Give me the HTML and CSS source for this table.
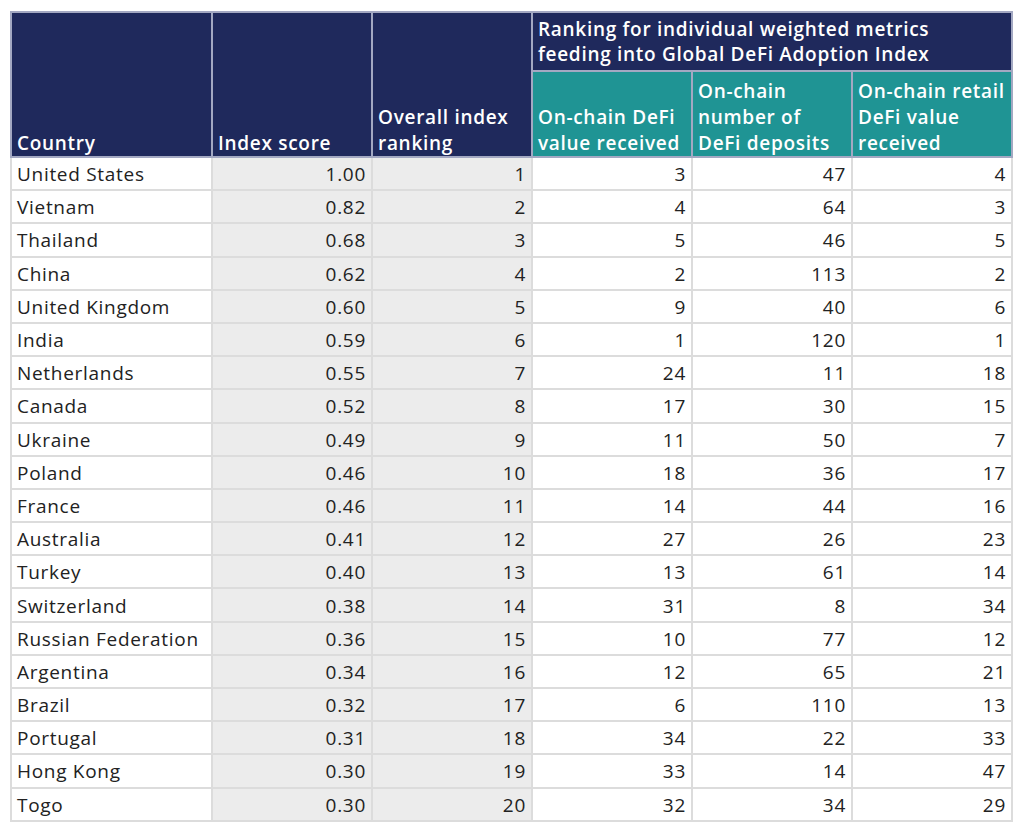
FILE: index.html
```html
<!DOCTYPE html>
<html>
<head>
<meta charset="utf-8">
<link rel="stylesheet" href="styles.css">
</head>
<body>
<div class="page">
<table class="rank">
  <colgroup>
    <col class="c-country"><col class="c-mid"><col class="c-mid"><col class="c-mid"><col class="c-mid4"><col class="c-mid">
  </colgroup>
  <thead>
    <tr class="group-row">
      <th rowspan="2" class="navy">Country</th>
      <th rowspan="2" class="navy">Index score</th>
      <th rowspan="2" class="navy">Overall index ranking</th>
      <th colspan="3" class="navy group">Ranking for individual weighted metrics feeding into Global DeFi Adoption Index</th>
    </tr>
    <tr class="sub-row">
      <th class="teal">On-chain DeFi value received</th>
      <th class="teal">On-chain number of DeFi deposits</th>
      <th class="teal">On-chain retail DeFi value received</th>
    </tr>
  </thead>
  <tbody>
    <tr><td>United States</td><td class="num grey">1.00</td><td class="num grey">1</td><td class="num">3</td><td class="num">47</td><td class="num">4</td></tr>
    <tr><td>Vietnam</td><td class="num grey">0.82</td><td class="num grey">2</td><td class="num">4</td><td class="num">64</td><td class="num">3</td></tr>
    <tr><td>Thailand</td><td class="num grey">0.68</td><td class="num grey">3</td><td class="num">5</td><td class="num">46</td><td class="num">5</td></tr>
    <tr><td>China</td><td class="num grey">0.62</td><td class="num grey">4</td><td class="num">2</td><td class="num">113</td><td class="num">2</td></tr>
    <tr><td>United Kingdom</td><td class="num grey">0.60</td><td class="num grey">5</td><td class="num">9</td><td class="num">40</td><td class="num">6</td></tr>
    <tr><td>India</td><td class="num grey">0.59</td><td class="num grey">6</td><td class="num">1</td><td class="num">120</td><td class="num">1</td></tr>
    <tr><td>Netherlands</td><td class="num grey">0.55</td><td class="num grey">7</td><td class="num">24</td><td class="num">11</td><td class="num">18</td></tr>
    <tr><td>Canada</td><td class="num grey">0.52</td><td class="num grey">8</td><td class="num">17</td><td class="num">30</td><td class="num">15</td></tr>
    <tr><td>Ukraine</td><td class="num grey">0.49</td><td class="num grey">9</td><td class="num">11</td><td class="num">50</td><td class="num">7</td></tr>
    <tr><td>Poland</td><td class="num grey">0.46</td><td class="num grey">10</td><td class="num">18</td><td class="num">36</td><td class="num">17</td></tr>
    <tr><td>France</td><td class="num grey">0.46</td><td class="num grey">11</td><td class="num">14</td><td class="num">44</td><td class="num">16</td></tr>
    <tr><td>Australia</td><td class="num grey">0.41</td><td class="num grey">12</td><td class="num">27</td><td class="num">26</td><td class="num">23</td></tr>
    <tr><td>Turkey</td><td class="num grey">0.40</td><td class="num grey">13</td><td class="num">13</td><td class="num">61</td><td class="num">14</td></tr>
    <tr><td>Switzerland</td><td class="num grey">0.38</td><td class="num grey">14</td><td class="num">31</td><td class="num">8</td><td class="num">34</td></tr>
    <tr><td>Russian Federation</td><td class="num grey">0.36</td><td class="num grey">15</td><td class="num">10</td><td class="num">77</td><td class="num">12</td></tr>
    <tr><td>Argentina</td><td class="num grey">0.34</td><td class="num grey">16</td><td class="num">12</td><td class="num">65</td><td class="num">21</td></tr>
    <tr><td>Brazil</td><td class="num grey">0.32</td><td class="num grey">17</td><td class="num">6</td><td class="num">110</td><td class="num">13</td></tr>
    <tr><td>Portugal</td><td class="num grey">0.31</td><td class="num grey">18</td><td class="num">34</td><td class="num">22</td><td class="num">33</td></tr>
    <tr><td>Hong Kong</td><td class="num grey">0.30</td><td class="num grey">19</td><td class="num">33</td><td class="num">14</td><td class="num">47</td></tr>
    <tr><td>Togo</td><td class="num grey">0.30</td><td class="num grey">20</td><td class="num">32</td><td class="num">34</td><td class="num">29</td></tr>
  </tbody>
</table>
</div>
</body>
</html>
```

FILE: styles.css
```css
html, body {
  margin: 0;
  padding: 0;
  background: #ffffff;
}
.page {
  padding: 11px 0 0 10px;
}
.rank {
  border-collapse: collapse;
  table-layout: fixed;
  width: 1001px;
  font-family: "Open Sans", "Liberation Sans", sans-serif;
  font-size: 19px;
  letter-spacing: 0.7px;
  color: #222222;
}
.c-country { width: 201px; }
.c-mid { width: 160px; }
.c-mid4 { width: 160px; }
.rank th, .rank td {
  border: 2px solid #dcdcdc;
  padding: 0 5px 0 5px;
  overflow: hidden;
  white-space: nowrap;
}
.rank th {
  color: #ffffff;
  font-weight: 600;
  text-align: left;
  vertical-align: bottom;
  line-height: 26px;
  white-space: normal;
  border-color: #a3a8c2;
}
.group-row { height: 59px; }
.sub-row { height: 86px; }
.navy { background: #1f295c; padding-bottom: 5px; }
.group { vertical-align: middle !important; line-height: 25px !important; padding-top: 5px; padding-bottom: 3px; }
.teal { background: #1f9494; padding-bottom: 5px; }
.rank tbody tr { height: 33.2px; }
.rank td { line-height: 24px; vertical-align: middle; padding-top: 1px; }
.num { text-align: right; }
.grey { background: #ececec; }
```
